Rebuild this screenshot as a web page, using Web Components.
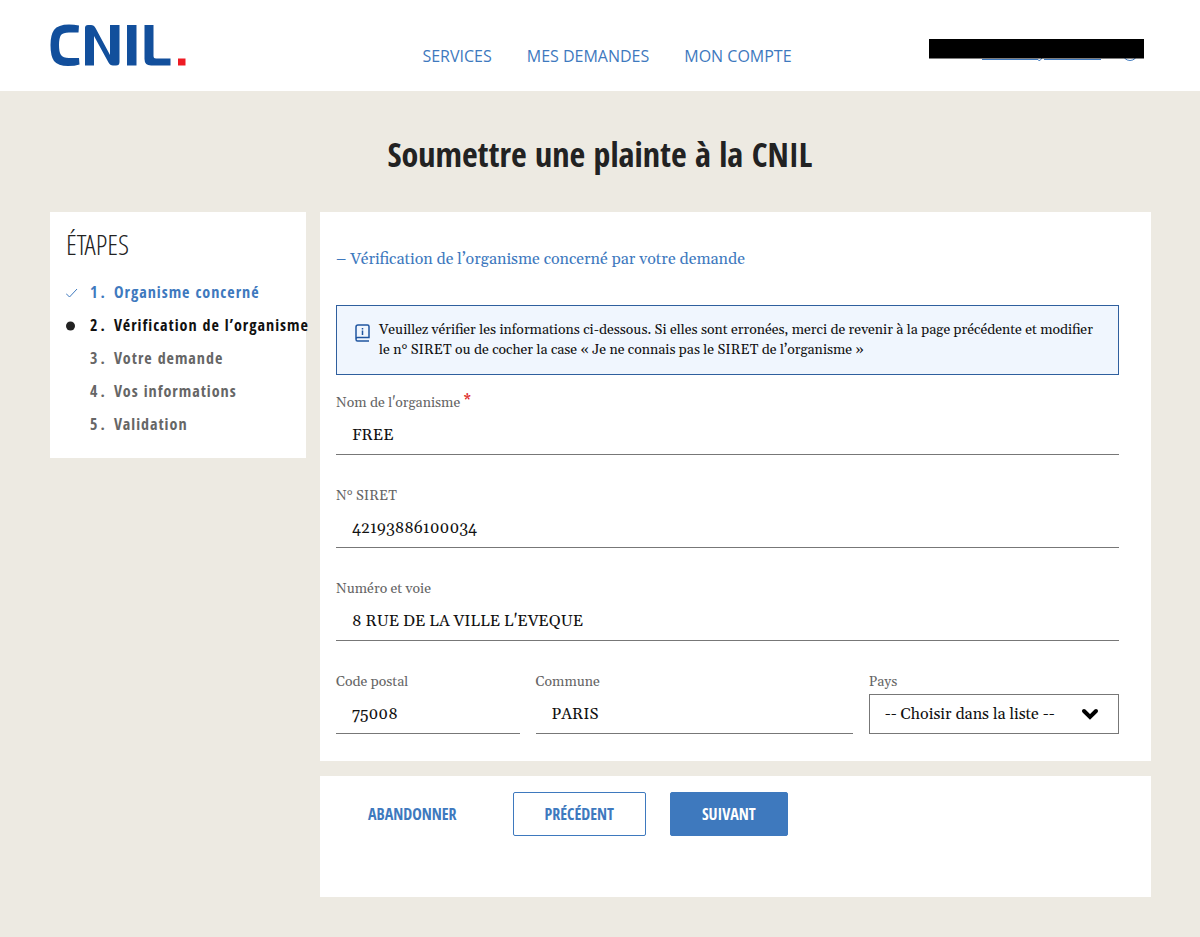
<!DOCTYPE html>
<html lang="fr">
<head>
<meta charset="utf-8">
<meta name="viewport" content="width=device-width, initial-scale=1">
<title>Soumettre une plainte à la CNIL</title>
<style>
  :root {
    --blue: #3e79be;
    --ink: #222;
    --grey: #666;
    --line: #777;
    --sand: #edeae2;
    --serif: Georgia, Gelasio, "Liberation Serif", serif;
    --condensed: "Open Sans Condensed", "Liberation Sans Narrow", "Open Sans", sans-serif;
    --condensed-light: "Open Sans Condensed Light", "Open Sans Light Condensed", "Open Sans Condensed", "Liberation Sans Narrow", sans-serif;
    --sans: "Open Sans", sans-serif;
  }
  body { margin: 0; background: var(--sand); font: 16px/20px var(--serif); color: var(--ink); }
</style>
</head>
<body>
<complaint-page></complaint-page>

<script>
const define = (name, html, setup) => {
  const template = document.createElement('template');
  template.innerHTML = html;
  customElements.define(name, class extends HTMLElement {
    constructor() {
      super();
      this.attachShadow({ mode: 'open' }).append(template.content.cloneNode(true));
    }
    connectedCallback() { if (setup) setup(this, this.shadowRoot); }
  });
};

define('cnil-logo', `
  <style>
    :host { display: block; width: 138px; height: 44px; }
    a, svg { display: block; }
  </style>
  <a href="#" aria-label="CNIL">
    <svg width="138" height="44" viewBox="0 0 138 44" aria-hidden="true">
      <g fill="#124f9c">
        <path d="M29 1.5 Q24 .5 19 .5 Q8 .5 4 6 Q.5 11 .5 21 Q.5 32 4 37 Q8 42 18 42 Q25 42 29.500 40.500 L29 34 H19 Q13 34 11 31 Q9 28.500 9 21 Q9 14 11 11 Q13 8.500 19 8.500 H28.500 Z"/>
        <path d="M35 41.500 V4 Q35 1 38 1 H41 Q44 1 45.500 4 L60 31 V1 H69.500 V38 Q69.500 41.500 66 41.500 H63 Q60 41.500 58.500 38.500 L44 12 V41.500 Z"/>
        <path d="M77 1 H86.500 V41.500 H77 Z"/>
        <path d="M94.500 1 H103.500 V32 Q103.500 34.500 106 34.500 H120.500 V41.500 H101 Q94.500 41.500 94.500 35 Z"/>
      </g>
      <path fill="#ee1b24" d="M128 34.500 H135.500 V41.500 H128 Z"/>
    </svg>
  </a>`);

define('site-header', `
  <style>
    :host { display: block; background: #fff; }
    header { display: grid; grid-template-columns: 1fr auto 1fr; align-items: start; padding: 24px 50px 23px; }
    nav { display: flex; gap: 35px; padding: 20px 0 0 14px; font: 16px/24px var(--sans); }
    nav a { color: var(--blue); text-decoration: none; }
    .account { display: block; justify-self: end; padding: 15px 6px 0 0; }
    svg { display: block; }
  </style>
  <header>
    <cnil-logo></cnil-logo>
    <nav aria-label="Menu principal">
      <a href="#">SERVICES</a>
      <a href="#">MES DEMANDES</a>
      <a href="#">MON COMPTE</a>
    </nav>
    <a class="account" href="#" aria-label="Compte">
      <svg width="216" height="24" viewBox="0 0 216 24" aria-hidden="true">
        <path d="M54 20.500 H110 M116 20.500 H173 M110 21 Q112 23 114 19" fill="none" stroke="#3e79be"/>
        <circle cx="202" cy="14" r="7.500" fill="none" stroke="#3e79be"/>
        <path d="M1 0 H216 V19.500 H1 Z"/>
      </svg>
    </a>
  </header>`);

define('step-item', `
  <style>
    :host { display: grid; grid-template-columns: 24px 24px auto; align-items: center; line-height: 33px; color: var(--grey); white-space: nowrap; }
    :host([state=done]) { color: var(--blue); }
    :host([state=current]) { color: #111; }
    svg { display: none; }
    :host([state=done]) .check, :host([state=current]) .dot { display: block; }
    .number { display: flex; gap: 2px; }
  </style>
  <span>
    <svg class="check" width="12" height="12" viewBox="0 0 12 12" aria-hidden="true"><path d="M0 6.500 L3.500 10 L11 2" fill="none" stroke="currentColor"/></svg>
    <svg class="dot" width="10" height="10" viewBox="0 0 10 10" aria-hidden="true"><circle cx="4.500" cy="5" r="4.500" fill="#222"/></svg>
  </span>
  <span class="number"><span class="value"></span><span>.</span></span>
  <span><slot></slot></span>`,
  (el, root) => {
    el.setAttribute('role', 'listitem');
    root.querySelector('.value').textContent = el.getAttribute('number');
  });

define('step-list', `
  <style>
    :host { display: block; background: #fff; }
    section { padding: 16px 0 17px 16px; }
    h2 { margin: 0 0 16px; font: 300 28px/32px var(--condensed-light); }
    div { font: bold 16px/33px var(--condensed); letter-spacing: 1px; }
  </style>
  <section>
    <h2>ÉTAPES</h2>
    <div role="list"><slot></slot></div>
  </section>`);

define('info-note', `
  <style>
    :host { display: flex; gap: 8px; padding: 14px 16px 14px 18px; border: 1px solid #2f5f9e; background: #f0f6fe; color: #111; font-size: 14px; line-height: 20px; }
    svg { flex: none; margin-top: 4px; }
    p { margin: 0; }
  </style>
  <svg width="16" height="18" viewBox="0 0 16 18" aria-hidden="true">
    <path d="M1 15 V3 Q1 1 3 1 H12.500 Q14 1 14 2.500 V13.500 H2.500 Q1 13.500 1 15.200 Q1 17 2.500 17 H14" fill="none" stroke="#1f55a0" stroke-width="1.500"/>
    <path d="M7.500 4 V5.500 M7.500 6.500 V11" stroke="#1f55a0" stroke-width="1.500"/>
  </svg>
  <p><slot></slot></p>`);

define('text-field', `
  <style>
    :host { display: block; }
    label { display: block; font-size: 14px; line-height: 24px; color: var(--grey); }
    sup { display: none; color: #d22; font-size: 16px; line-height: 0; vertical-align: 2px; }
    :host([required]) sup { display: inline; }
    input { display: block; box-sizing: border-box; width: 100%; height: 40px; margin: 0; padding: 0 16px; border: 0; border-bottom: 1px solid var(--line); border-radius: 0; background: none; font: 16px/20px var(--serif); color: #111; outline: 0; }
  </style>
  <label for="field"><span></span> <sup>*</sup></label>
  <input id="field" type="text">`,
  (el, root) => {
    root.querySelector('span').textContent = el.getAttribute('label');
    const input = root.querySelector('input');
    input.value = el.getAttribute('value');
    input.required = el.hasAttribute('required');
  });

define('country-select', `
  <style>
    :host { display: block; }
    label { display: block; font-size: 14px; line-height: 24px; color: var(--grey); }
    div { position: relative; }
    select { appearance: none; display: block; box-sizing: border-box; width: 100%; height: 40px; margin: 0; padding: 0 44px 0 15px; border: 1px solid var(--line); border-radius: 0; background: #fff; font: 16px/20px var(--serif); color: #111; }
    svg { position: absolute; top: 14px; right: 20px; pointer-events: none; }
  </style>
  <label for="field">Pays</label>
  <div>
    <select id="field"><option>-- Choisir dans la liste --</option><option>France</option></select>
    <svg width="18" height="12" viewBox="0 0 18 12" aria-hidden="true"><path d="M3 3 L9 9 L15 3" fill="none" stroke="#000" stroke-width="4" stroke-linecap="round"/></svg>
  </div>`);

define('action-button', `
  <style>
    :host { display: block; }
    button { display: block; height: 44px; padding: 0 31px; border: 1px solid transparent; border-radius: 2px; background: none; color: var(--blue); font: bold 16px/20px var(--condensed); }
    :host([kind=outline]) button { border-color: var(--blue); }
    :host([kind=solid]) button { background: var(--blue); border-color: var(--blue); color: #fff; }
  </style>
  <button type="button"><slot></slot></button>`);

define('complaint-page', `
  <style>
    :host { display: block; }
    h1 { margin: 0; padding: 39px 16px 33px; text-align: center; font: bold 34px/49px var(--condensed); }
    .columns { display: grid; grid-template-columns: 256px minmax(0, 1fr); gap: 14px; align-items: start; padding: 0 49px 40px 50px; }
    .main { display: grid; gap: 15px; }
    .panel { background: #fff; }
    .form { padding: 32px 32px 27px 16px; }
    h2 { margin: 0 0 31px; font: 16px/30px var(--serif); color: var(--blue); }
    info-note { margin-bottom: 16px; }
    .fields { display: grid; gap: 29px; }
    .row { display: grid; grid-template-columns: 11fr 19fr 15fr; gap: 16px; }
    .actions { display: flex; gap: 24px; padding: 16px 16px 61px; }
  </style>
  <site-header></site-header>
  <main>
    <h1>Soumettre une plainte à la CNIL</h1>
    <div class="columns">
      <step-list>
        <step-item number="1" state="done">Organisme concerné</step-item>
        <step-item number="2" state="current">Vérification de l’organisme</step-item>
        <step-item number="3">Votre demande</step-item>
        <step-item number="4">Vos informations</step-item>
        <step-item number="5">Validation</step-item>
      </step-list>
      <div class="main">
        <section class="panel form">
          <h2>– Vérification de l’organisme concerné par votre demande</h2>
          <info-note>Veuillez vérifier les informations ci-dessous. Si elles sont erronées, merci de revenir à la page précédente et modifier le n° SIRET ou de cocher la case « Je ne connais pas le SIRET de l’organisme »</info-note>
          <div class="fields">
            <text-field label="Nom de l'organisme" value="FREE" required></text-field>
            <text-field label="N° SIRET" value="42193886100034"></text-field>
            <text-field label="Numéro et voie" value="8 RUE DE LA VILLE L'EVEQUE"></text-field>
            <div class="row">
              <text-field label="Code postal" value="75008"></text-field>
              <text-field label="Commune" value="PARIS"></text-field>
              <country-select></country-select>
            </div>
          </div>
        </section>
        <section class="panel actions">
          <action-button>ABANDONNER</action-button>
          <action-button kind="outline">PRÉCÉDENT</action-button>
          <action-button kind="solid">SUIVANT</action-button>
        </section>
      </div>
    </div>
  </main>`);
</script>
</body>
</html>
